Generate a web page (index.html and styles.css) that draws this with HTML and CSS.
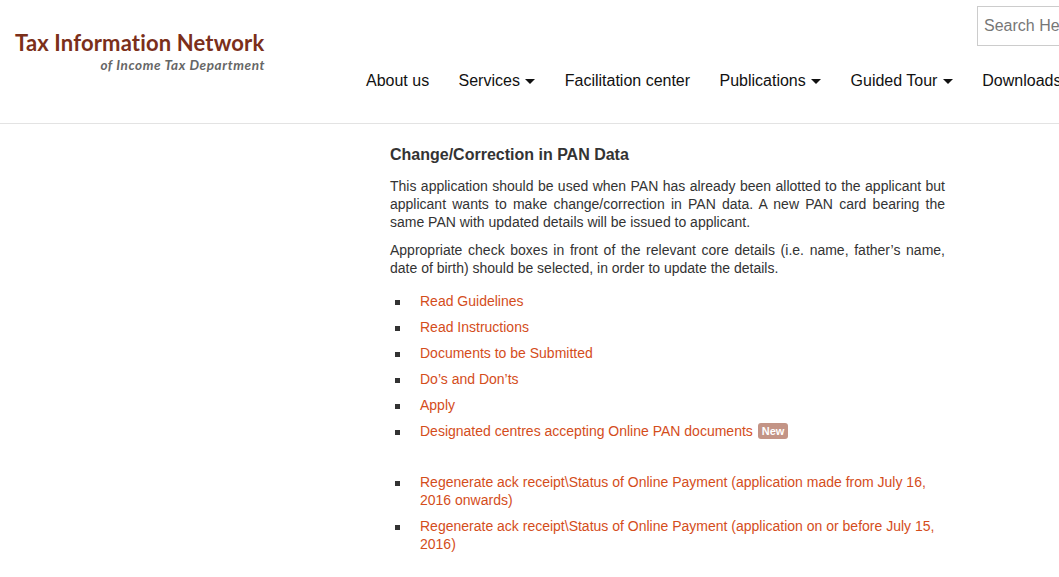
FILE: index.html
```html
<!DOCTYPE html>
<html lang="en">
<head>
    <meta charset="UTF-8">
    <meta name="viewport" content="width=device-width, initial-scale=1.0">
    <title>Change/Correction in PAN Data</title>
    <link rel="stylesheet" href="styles.css">
</head>
<body>
    <header class="site-header">
        <div class="brand">
            <div class="brand-title">Tax Information Network</div>
            <div class="brand-sub">of Income Tax Department</div>
        </div>
        <div class="header-right">
            <div class="search-row">
                <input type="text" class="search" placeholder="Search Here">
            </div>
            <nav class="main-nav">
                <a href="#">About us</a>
                <a href="#">Services <span class="caret"></span></a>
                <a href="#">Facilitation center</a>
                <a href="#">Publications <span class="caret"></span></a>
                <a href="#">Guided Tour <span class="caret"></span></a>
                <a href="#">Downloads</a>
            </nav>
        </div>
    </header>

    <main class="page">
        <div class="content">
            <h2>Change/Correction in PAN Data</h2>
            <p>This application should be used when PAN has already been allotted to the applicant but applicant wants to make change/correction in PAN data. A new PAN card bearing the same PAN with updated details will be issued to applicant.</p>
            <p>Appropriate check boxes in front of the relevant core details (i.e. name, father’s name, date of birth) should be selected, in order to update the details.</p>

            <ul class="links">
                <li><a href="#">Read Guidelines</a></li>
                <li><a href="#">Read Instructions</a></li>
                <li><a href="#">Documents to be Submitted</a></li>
                <li><a href="#">Do’s and Don’ts</a></li>
                <li><a href="#">Apply</a></li>
                <li><a href="#">Designated centres accepting Online PAN documents</a> <span class="badge">New</span></li>
                <li class="spaced"><a href="#">Regenerate ack receipt\Status of Online Payment (application made from July 16, 2016 onwards)</a></li>
                <li><a href="#">Regenerate ack receipt\Status of Online Payment (application on or before July 15, 2016)</a></li>
            </ul>
        </div>
    </main>
</body>
</html>
```

FILE: styles.css
```css
body {
    margin: 0;
    font-family: 'Liberation Sans', Arial, sans-serif;
    color: #333;
    background: #fff;
    overflow: hidden;
}

a {
    text-decoration: none;
}

/* Header */
.site-header {
    display: flex;
    height: 123px;
    border-bottom: 1px solid #e3e3e3;
    box-sizing: content-box;
}

.brand {
    width: 336px;
    flex-shrink: 0;
    padding-left: 15px;
    padding-top: 29px;
}

.brand-title {
    display: inline-block;
    font-family: 'Lato', sans-serif;
    font-weight: 700;
    font-size: 22px;
    color: #7b2f1a;
    letter-spacing: 0.15px;
    line-height: 28px;
}

.brand-sub {
    width: 250px;
    text-align: right;
    font-family: 'Lato', sans-serif;
    font-style: italic;
    font-weight: 700;
    font-size: 13.5px;
    color: #666;
    letter-spacing: 0.6px;
    line-height: 16px;
}

.header-right {
    width: 820px;
    flex-shrink: 0;
}

.search-row {
    padding-top: 6px;
    padding-left: 626px;
}

.search {
    width: 200px;
    height: 40px;
    box-sizing: border-box;
    border: 1px solid #ccc;
    padding: 0 6px;
    font-family: 'Liberation Sans', Arial, sans-serif;
    font-size: 16px;
    color: #555;
}

.search::placeholder {
    color: #777;
}

.main-nav {
    display: flex;
    margin-top: 24px;
}

.main-nav a {
    padding: 0 14.7px;
    font-size: 16px;
    line-height: 22px;
    color: #111;
    white-space: nowrap;
}

.main-nav a:first-child {
    padding-left: 15px;
}

.caret {
    display: inline-block;
    width: 0;
    height: 0;
    margin-left: 1px;
    vertical-align: middle;
    border-top: 5px solid #111;
    border-left: 5px solid transparent;
    border-right: 5px solid transparent;
}

/* Content */
.page {
    padding-left: 390px;
}

.content {
    width: 555px;
    padding-top: 21px;
}

.content h2 {
    margin: 0 0 12px;
    font-size: 16px;
    line-height: 20px;
    font-weight: 700;
    color: #333;
}

.content p {
    margin: 0 0 10px;
    font-size: 14px;
    line-height: 18px;
    text-align: justify;
}

.links {
    list-style: none;
    margin: 15px 0 0;
    padding: 0;
}

.links li {
    position: relative;
    padding-left: 30px;
    margin-bottom: 8px;
    font-size: 14px;
    line-height: 18px;
}

.links li::before {
    content: "";
    position: absolute;
    left: 5px;
    top: 8px;
    width: 5px;
    height: 5px;
    background: #333;
}

.links li.spaced {
    margin-top: 33px;
}

.links a {
    color: #d44d1b;
}

.badge {
    display: inline-block;
    padding: 0 4px;
    margin-left: 1px;
    border-radius: 3px;
    background: #c39486;
    color: #fff;
    font-size: 11px;
    font-weight: 700;
    line-height: 16px;
    vertical-align: 1px;
}
```
